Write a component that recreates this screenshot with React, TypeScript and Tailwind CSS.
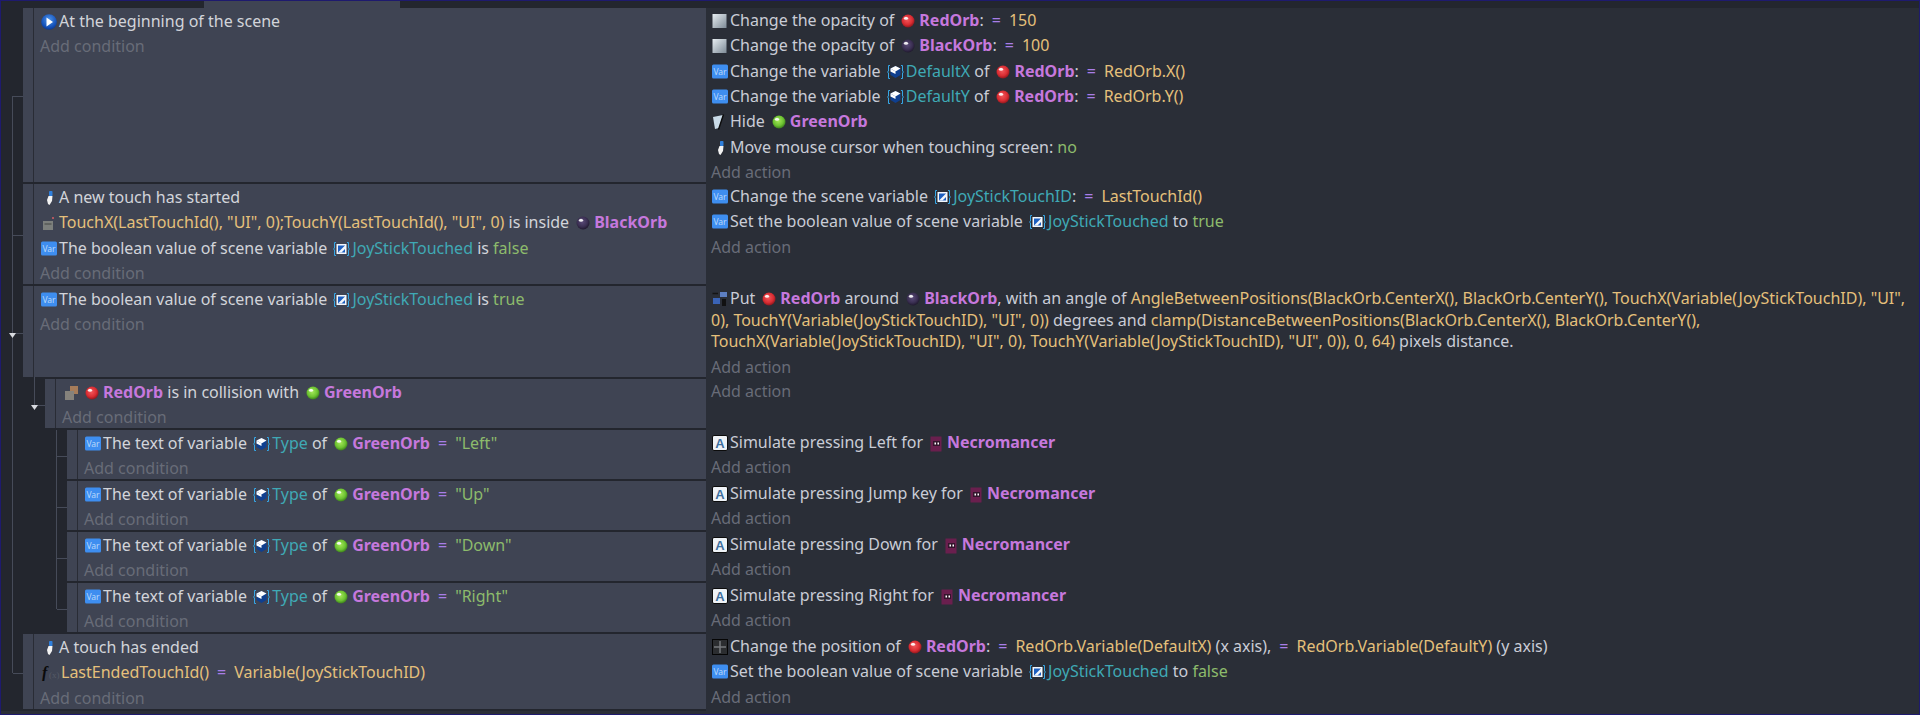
import type { ReactNode } from 'react'

// little sprites used by the events sheet
const Orb = ({ light, mid, dark }: { light: string; mid: string; dark: string }) => {
  const id = 'orb' + mid.slice(1)
  return (
    <svg viewBox="0 0 14 14" className="inline-block w-[14px] h-[14px] align-[-2px] ml-[7px] mr-[4px]">
      <defs>
        <radialGradient id={id} cx="0.45" cy="0.4" r="0.65">
          <stop offset="0" stopColor={light} />
          <stop offset="0.6" stopColor={mid} />
          <stop offset="1" stopColor={dark} />
        </radialGradient>
      </defs>
      <circle cx="7" cy="7" r="6.5" fill={`url(#${id})`} />
      <ellipse cx="5" cy="4.2" rx="2.1" ry="1.5" fill="#ffffff" opacity="0.9" />
    </svg>
  )
}

const RedOrbIcon = () => <Orb light="#f2595c" mid="#d92c32" dark="#7c1218" />
const GreenOrbIcon = () => <Orb light="#a6e85a" mid="#6cc231" dark="#2f6d17" />
const BlackOrbIcon = () => <Orb light="#5a4a78" mid="#3a2f52" dark="#1a1426" />

const iconClass = 'inline-block w-4 h-4 align-[-3px] ml-px mr-[2px]'

const VarIcon = () => (
  <svg viewBox="0 0 16 16" className={iconClass}>
    <rect x="0" y="0.5" width="16" height="14" rx="1.5" fill="#3e8ef0" />
    <text x="8" y="11" textAnchor="middle" fontSize="8.5" fontFamily="'Noto Sans', sans-serif" fill="#b9d8fb">Var</text>
  </svg>
)

const PlayIcon = () => (
  <svg viewBox="0 0 16 16" className={iconClass}>
    <defs>
      <radialGradient id="playg" cx="0.5" cy="0.35" r="0.7">
        <stop offset="0" stopColor="#4f95ea" />
        <stop offset="0.7" stopColor="#1350b8" />
        <stop offset="1" stopColor="#0a2f80" />
      </radialGradient>
    </defs>
    <circle cx="8" cy="8" r="7.8" fill="url(#playg)" />
    <path d="M5.5 3.5 L12 8 L5.5 12.5 Z" fill="#ffffff" />
  </svg>
)

const TouchIcon = () => (
  <svg viewBox="0 0 16 16" className={iconClass}>
    <rect x="8" y="1" width="3.5" height="5" rx="0.8" fill="#2f7fdc" />
    <path d="M7.5 6 L11.5 6 L11 11 L8.5 15 L7 14 L6 10 Z" fill="#f2f2f2" />
  </svg>
)

const InsideIcon = () => (
  <svg viewBox="0 0 16 16" className={iconClass}>
    <rect x="2" y="6" width="10" height="9" fill="#7c7f7c" />
    <rect x="3.5" y="8" width="7" height="2" fill="#5f625f" />
    <rect x="11" y="2" width="2" height="2" fill="#b0565f" />
  </svg>
)

const Braces = ({ children }: { children: ReactNode }) => (
  <svg viewBox="0 0 17 16" className="inline-block w-[17px] h-4 align-[-3px] ml-[2px] mr-[2px]">
    <path d="M3 1.5 H1.5 V7 L0.5 8 L1.5 9 V14.5 H3" fill="none" stroke="#36a7e6" strokeWidth="1" />
    <path d="M14 1.5 H15.5 V7 L16.5 8 L15.5 9 V14.5 H14" fill="none" stroke="#36a7e6" strokeWidth="1" />
    {children}
  </svg>
)

const SceneVarIcon = () => (
  <Braces>
    <rect x="3.5" y="3" width="10" height="10" fill="#f2f6fb" />
    <rect x="5" y="4.5" width="7" height="7" fill="#1c5fc0" />
    <path d="M5 11.5 L12 4.5 V8 L8.5 11.5 Z" fill="#f2f6fb" />
  </Braces>
)

const ObjVarIcon = () => (
  <Braces>
    <path d="M8.5 2 L13.5 4.5 V11 L8.5 14 L3.5 11 V4.5 Z" fill="#0f3f8f" />
    <path d="M8.5 2 L13.5 4.5 L8.5 7.5 L3.5 4.5 Z" fill="#ffffff" />
    <path d="M3.5 4.5 L8.5 7.5 V10 L3.5 7.5 Z" fill="#ffffff" />
  </Braces>
)

const OpacityIcon = () => (
  <svg viewBox="0 0 16 16" className={iconClass}>
    <defs>
      <linearGradient id="opag" x1="0" x2="1" y1="0" y2="1">
        <stop offset="0" stopColor="#e8eef2" />
        <stop offset="1" stopColor="#7d8a96" />
      </linearGradient>
    </defs>
    <rect x="0.5" y="1" width="14" height="14" fill="url(#opag)" />
  </svg>
)

const HideIcon = () => (
  <svg viewBox="0 0 16 16" className={iconClass}>
    <path d="M1 3 L11 1 L7 14 L3 15 Z" fill="#c9dbe8" />
    <path d="M11.5 0.5 L6.5 15.5" stroke="#0c0c0c" strokeWidth="1.4" />
  </svg>
)

const PutAroundIcon = () => (
  <svg viewBox="0 0 16 16" className={iconClass}>
    <path d="M0.5 2.5 H6" stroke="#141414" strokeWidth="1.5" />
    <rect x="8" y="1" width="7" height="5" fill="#5d7fc2" />
    <rect x="1" y="7" width="7" height="6" fill="#3a63b6" />
    <rect x="10" y="8" width="4" height="7" fill="#111111" />
  </svg>
)

const CollisionIcon = () => (
  <svg viewBox="0 0 16 16" className={iconClass}>
    <rect x="7" y="1" width="8" height="8" fill="#a67c5a" />
    <rect x="2" y="6" width="9" height="9" fill="#85827c" />
  </svg>
)

const KeyIcon = () => (
  <svg viewBox="0 0 16 16" className={iconClass}>
    <rect x="0.5" y="0.5" width="15" height="15" rx="1.5" fill="#eef2f6" stroke="#0c0c0c" />
    <text x="8" y="13" textAnchor="middle" fontSize="13" fontWeight="700" fontFamily="'Liberation Sans', sans-serif" fill="#3d6f9e">A</text>
  </svg>
)

const PositionIcon = () => (
  <svg viewBox="0 0 16 16" className={iconClass}>
    <rect x="0.5" y="0.5" width="15" height="15" fill="#2b2d30" stroke="#050505" />
    <path d="M8 2 V14 M2 8 H14" stroke="#75787c" strokeWidth="1.5" />
  </svg>
)

const FxIcon = () => (
  <svg viewBox="0 0 21 16" className="inline-block w-[21px] h-4 align-[-3px]">
    <text x="2" y="13" fontSize="16" fontStyle="italic" fontWeight="700" fontFamily="'Liberation Serif', serif" fill="#0a0a0a">f</text>
    <text x="9" y="13" fontSize="9" fontFamily="'Liberation Serif', serif" fill="#555a66">(x)</text>
  </svg>
)

const NecroIcon = () => (
  <svg viewBox="0 0 12 16" className="inline-block w-3 h-4 align-[-4px] ml-[7px] mr-[5px]">
    <rect x="0.5" y="0.5" width="11" height="15" fill="#6a1f4e" />
    <rect x="3" y="5" width="7" height="5" fill="#33162c" />
    <rect x="4.5" y="6.5" width="1.5" height="2" fill="#ffffff" />
    <rect x="7.5" y="6.5" width="1.5" height="2" fill="#ffffff" />
  </svg>
)

// text pieces
const Name = ({ children }: { children: ReactNode }) => <span className="font-bold text-[#c678dd]">{children}</span>
const Red = () => <><RedOrbIcon /><Name>RedOrb</Name></>
const Green = () => <><GreenOrbIcon /><Name>GreenOrb</Name></>
const Black = () => <><BlackOrbIcon /><Name>BlackOrb</Name></>
const Necro = () => <><NecroIcon /><Name>Necromancer</Name></>
const Expr = ({ children }: { children: ReactNode }) => <span className="text-[#e5c07b]">{children}</span>
const Lit = ({ children }: { children: ReactNode }) => <span className="text-[#8dbb6c]">{children}</span>
const Teal = ({ children }: { children: ReactNode }) => <span className="text-[#3fa9b5]">{children}</span>
const Eq = () => <span className="text-[#a97ee8] mx-[8px]">=</span>
const SceneVar = ({ name }: { name: string }) => <><SceneVarIcon /><Teal>{name}</Teal></>
const ObjVar = ({ name }: { name: string }) => <><ObjVarIcon /><Teal>{name}</Teal></>

const Line = ({ children }: { children: ReactNode }) => (
  <div className="leading-[25.33px] h-[25.33px] whitespace-nowrap">{children}</div>
)

const AddLine = ({ label }: { label: string }) => (
  <div className="leading-[24px] h-6 text-[#686c78] whitespace-nowrap">{label}</div>
)

type EventRow = {
  level: 0 | 1 | 2
  height: string
  conditions: ReactNode[]
  actions: ReactNode
}

const textCond = (value: string) => (
  <>
    <VarIcon />The text of variable <ObjVar name="Type" /> of<Green /><Eq /><Lit>"{value}"</Lit>
  </>
)

const press = (key: string) => (
  <Line>
    <KeyIcon />Simulate pressing {key} for<Necro />
  </Line>
)

const rows: EventRow[] = [
  {
    level: 0,
    height: 'h-[174px]',
    conditions: [<><PlayIcon />At the beginning of the scene</>],
    actions: (
      <>
        <Line><OpacityIcon />Change the opacity of<Red />:<Eq /><Expr>150</Expr></Line>
        <Line><OpacityIcon />Change the opacity of<Black />:<Eq /><Expr>100</Expr></Line>
        <Line><VarIcon />Change the variable <ObjVar name="DefaultX" /> of<Red />:<Eq /><Expr>RedOrb.X()</Expr></Line>
        <Line><VarIcon />Change the variable <ObjVar name="DefaultY" /> of<Red />:<Eq /><Expr>RedOrb.Y()</Expr></Line>
        <Line><HideIcon />Hide<Green /></Line>
        <Line><TouchIcon />Move mouse cursor when touching screen: <Lit>no</Lit></Line>
      </>
    ),
  },
  {
    level: 0,
    height: 'h-[100px]',
    conditions: [
      <><TouchIcon />A new touch has started</>,
      <><InsideIcon /><Expr>TouchX(LastTouchId(), "UI", 0);TouchY(LastTouchId(), "UI", 0)</Expr> is inside<Black /></>,
      <><VarIcon />The boolean value of scene variable <SceneVar name="JoyStickTouched" /> is <Lit>false</Lit></>,
    ],
    actions: (
      <>
        <Line><VarIcon />Change the scene variable <SceneVar name="JoyStickTouchID" />:<Eq /><Expr>LastTouchId()</Expr></Line>
        <Line><VarIcon />Set the boolean value of scene variable <SceneVar name="JoyStickTouched" /> to <Lit>true</Lit></Line>
      </>
    ),
  },
  {
    level: 0,
    height: 'h-[91px]',
    conditions: [<><VarIcon />The boolean value of scene variable <SceneVar name="JoyStickTouched" /> is <Lit>true</Lit></>],
    actions: (
      <div className="pt-[2px] pb-[2px] leading-[21.5px] whitespace-nowrap">
        <PutAroundIcon />Put<Red /> around<Black />, with an angle of{' '}
        <Expr>AngleBetweenPositions(BlackOrb.CenterX(), BlackOrb.CenterY(), TouchX(Variable(JoyStickTouchID), "UI",</Expr>
        <br />
        <Expr>0), TouchY(Variable(JoyStickTouchID), "UI", 0))</Expr> degrees and{' '}
        <Expr>clamp(DistanceBetweenPositions(BlackOrb.CenterX(), BlackOrb.CenterY(),</Expr>
        <br />
        <Expr>TouchX(Variable(JoyStickTouchID), "UI", 0), TouchY(Variable(JoyStickTouchID), "UI", 0)), 0, 64)</Expr> pixels distance.
      </div>
    ),
  },
  {
    level: 1,
    height: 'h-[49px]',
    conditions: [<><CollisionIcon /><span className="-ml-[3px]" /><Red /> is in collision with<Green /></>],
    actions: null,
  },
  { level: 2, height: 'h-[49px]', conditions: [textCond('Left')], actions: press('Left') },
  { level: 2, height: 'h-[49px]', conditions: [textCond('Up')], actions: press('Jump key') },
  { level: 2, height: 'h-[49px]', conditions: [textCond('Down')], actions: press('Down') },
  { level: 2, height: 'h-[49px]', conditions: [textCond('Right')], actions: press('Right') },
  {
    level: 0,
    height: 'h-[75px]',
    conditions: [
      <><TouchIcon />A touch has ended</>,
      <><FxIcon /><Expr>LastEndedTouchId()</Expr><Eq /><Expr>Variable(JoyStickTouchID)</Expr></>,
    ],
    actions: (
      <>
        <Line>
          <PositionIcon />Change the position of<Red />:<Eq /><Expr>RedOrb.Variable(DefaultX)</Expr> (x axis),<Eq /><Expr>RedOrb.Variable(DefaultY)</Expr> (y axis)
        </Line>
        <Line><VarIcon />Set the boolean value of scene variable <SceneVar name="JoyStickTouched" /> to <Lit>false</Lit></Line>
      </>
    ),
  },
]

const gutter = { 0: 'pl-[22px]', 1: 'pl-[44px]', 2: 'pl-[66px]' }

function Row({ row }: { row: EventRow }) {
  return (
    <div className="flex">
      <div className={`w-[705px] shrink-0 pb-[2px] bg-[#23262e] ${gutter[row.level]}`}>
        <div className={`flex bg-[#3f4453] ${row.height}`}>
          <div className="w-[10px] shrink-0 border-r border-[#292c35] box-content" />
          <div className="pl-[6px] pt-px text-[#d2d4da]">
            {row.conditions.map((c, i) => (
              <Line key={i}>{c}</Line>
            ))}
            <AddLine label="Add condition" />
          </div>
        </div>
      </div>
      <div className="flex-1 pl-[5px] text-[#c9ccd6]">
        {row.actions}
        <AddLine label="Add action" />
      </div>
    </div>
  )
}

export default function App() {
  return (
    <div className="relative w-[1920px] h-[715px] overflow-hidden flex flex-col bg-[#2a2e37] border-x border-b border-[#1e1a6e] font-['Noto_Sans',sans-serif] text-[16px]">
      <div className="h-2 shrink-0 bg-[#23262e] border-t border-[#1e1a6e]">
        <div className="ml-[203px] w-[196px] h-full bg-[#3f4453]" />
      </div>
      {rows.map((r, i) => (
        <Row key={i} row={r} />
      ))}

      {/* tree lines between events */}
      <svg className="absolute left-0 top-0 pointer-events-none" width="70" height="715" viewBox="0 0 70 715">
        <g stroke="#464b59" strokeWidth="1" fill="none" shapeRendering="crispEdges">
          <path d="M11.5 96 V673 M12 96 H22 M12 235 H22 M12 333 H22 M12 673 H22" />
          <path d="M33.5 377 V405 M34 405 H44" />
          <path d="M55.5 430 V609 M56 456 H66 M56 507 H66 M56 558 H66 M56 609 H66" />
        </g>
        <path d="M8 333 H15 L11.5 338 Z" fill="#d8dadf" />
        <path d="M30 405 H37 L33.5 410 Z" fill="#d8dadf" />
      </svg>
    </div>
  )
}
